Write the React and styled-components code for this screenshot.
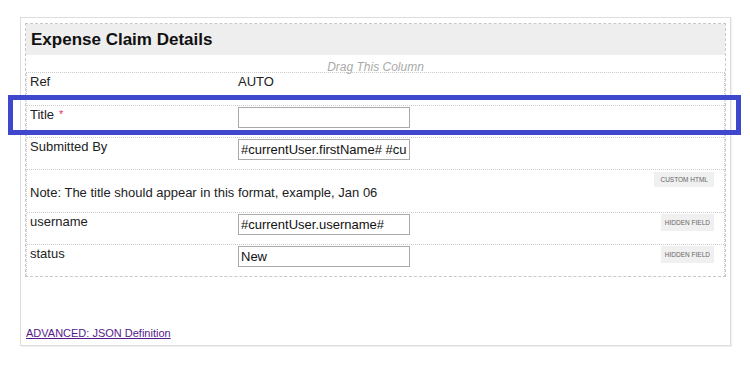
import React from 'react';
import styled, { createGlobalStyle } from 'styled-components';

const GlobalStyle = createGlobalStyle`
  html, body {
    margin: 0;
    padding: 0;
    background: #fff;
  }
  body {
    font-family: "Liberation Sans", Arial, sans-serif;
    color: #222;
  }
`;

const Page = styled.div`
  padding: 17px 0 0 20px;
  width: 750px;
  height: 367px;
  box-sizing: border-box;
`;

const Panel = styled.div`
  width: 711px;
  box-sizing: border-box;
  border: 1px solid #ddd;
  box-shadow: 1px 1px 1px rgba(0, 0, 0, 0.06);
  padding: 5px 4px 5px 4px;
  background: #fff;
`;

const FormBox = styled.div`
  border: 1px dashed #c8c8c8;
`;

const FormHeader = styled.h2`
  margin: 0;
  height: 31px;
  box-sizing: border-box;
  padding: 6px 5px 0;
  background: #eee;
  font-size: 17px;
  line-height: 19px;
  font-weight: bold;
  color: #111;
`;

const DragHint = styled.div`
  height: 17px;
  box-sizing: border-box;
  padding-top: 5px;
  line-height: 14px;
  text-align: center;
  font-size: 12px;
  font-style: italic;
  color: #aaa;
`;

const Column = styled.div`
  border: 1px dotted #ccc;
  border-bottom: none;
`;

const Row = styled.div`
  position: relative;
  display: flex;
  align-items: flex-start;
  min-height: ${p => (p.$tall ? 43 : 32)}px;
  box-sizing: border-box;
  padding: 0 0 0 3px;
  border-top: ${p => (p.$first ? 'none' : '1px dotted #ccc')};
  font-size: 13px;
  line-height: 15px;
`;

const Label = styled.div`
  width: 208px;
  padding-top: 1px;
  flex-shrink: 0;
`;

const Value = styled.div`
  padding-top: 1px;
`;

const Required = styled.span`
  color: #e0345a;
  font-size: 11px;
  margin-left: 5px;
  vertical-align: 1px;
`;

const TextInput = styled.input`
  margin: 1px 0 0;
  width: 172px;
  height: 21px;
  box-sizing: border-box;
  border: 1px solid #aaa;
  padding: 0 2px;
  font-family: "Liberation Sans", Arial, sans-serif;
  font-size: 13px;
  color: #111;
  background: #fff;
  outline: none;
`;

const Note = styled.p`
  margin: 15px 0 12px;
`;

const Badge = styled.span`
  position: absolute;
  top: ${p => (p.$compact ? 2 : 1)}px;
  right: 10px;
  height: ${p => (p.$compact ? 15 : 17)}px;
  line-height: ${p => (p.$compact ? 15 : 17)}px;
  padding: 0 ${p => (p.$compact ? 6 : 4)}px;
  background: #f0f0f0;
  color: #666;
  font-size: 6.5px;
  text-transform: uppercase;
`;

const Highlight = styled.div`
  position: absolute;
  top: -11px;
  left: -19px;
  right: -17px;
  bottom: 2px;
  border: 5px solid #3f48cc;
  pointer-events: none;
  z-index: 2;
`;

const Footer = styled.div`
  margin-top: 50px;
  padding-left: 1px;
  font-size: 11px;
  line-height: 13px;
`;

const JsonLink = styled.a`
  color: #551a8b;
  text-decoration: underline;
`;

export default function App() {
  return (
    <>
      <GlobalStyle />
      <Page>
        <Panel>
          <FormBox>
            <FormHeader>Expense Claim Details</FormHeader>
            <DragHint>Drag This Column</DragHint>
            <Column>
              <Row $first>
                <Label>Ref</Label>
                <Value>AUTO</Value>
              </Row>
              <Row>
                <Label>
                  Title<Required>*</Required>
                </Label>
                <TextInput defaultValue="" />
                <Highlight />
              </Row>
              <Row>
                <Label>Submitted By</Label>
                <TextInput defaultValue="#currentUser.firstName# #currentUser.lastName#" />
              </Row>
              <Row $tall>
                <Note>Note: The title should appear in this format, example, Jan 06</Note>
                <Badge $compact>Custom HTML</Badge>
              </Row>
              <Row>
                <Label>username</Label>
                <TextInput defaultValue="#currentUser.username#" />
                <Badge>Hidden Field</Badge>
              </Row>
              <Row>
                <Label>status</Label>
                <TextInput defaultValue="New" />
                <Badge>Hidden Field</Badge>
              </Row>
            </Column>
          </FormBox>
          <Footer>
            <JsonLink href="#">ADVANCED: JSON Definition</JsonLink>
          </Footer>
        </Panel>
      </Page>
    </>
  );
}
